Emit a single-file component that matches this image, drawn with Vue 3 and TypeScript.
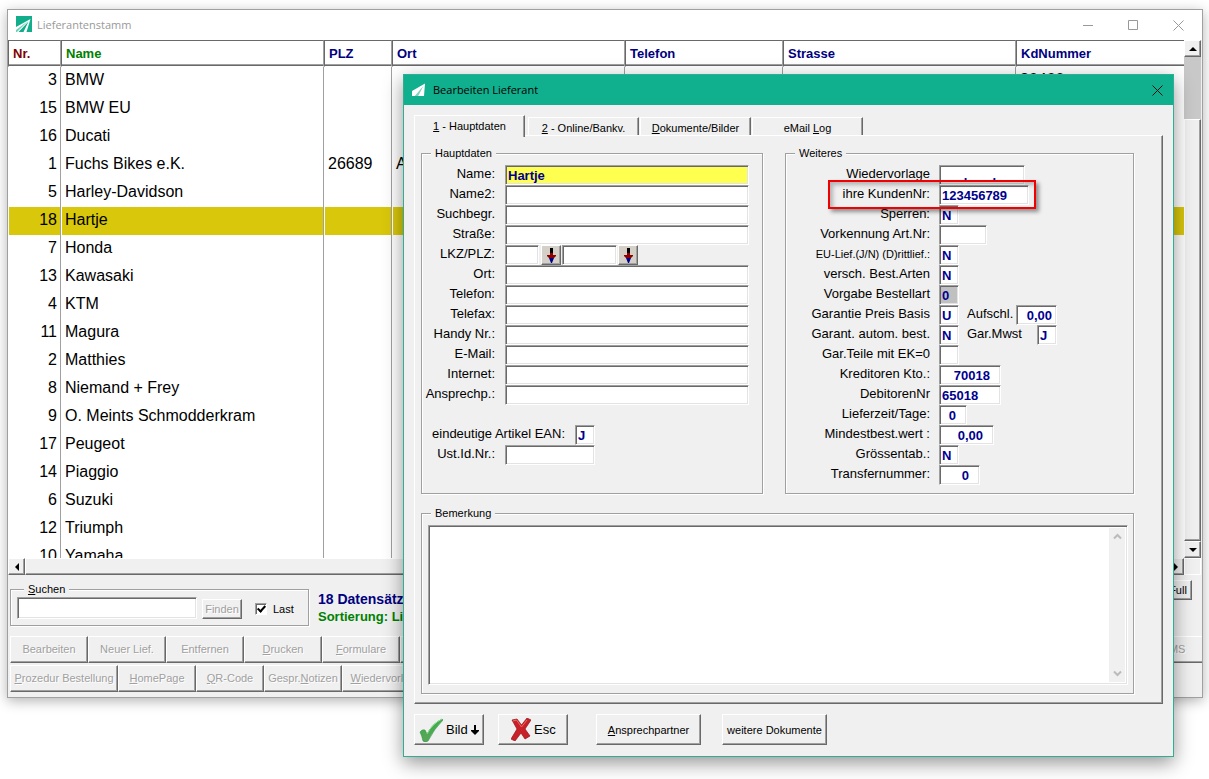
<script setup lang="ts">
import { ref } from 'vue'

interface Supplier { nr: number; name: string; plz?: string; ort?: string; kd?: string }
interface Extra { id: string; label: string; value: string; size: string; right?: boolean }
interface Field {
  id: string
  label: string
  value: string
  size: string
  right?: boolean
  small?: boolean
  grey?: boolean
  extra?: Extra
}
interface Action { pre: string; key: string; post: string; wide?: string }

const suppliers: Supplier[] = [
  { nr: 3, name: 'BMW', kd: '30400' },
  { nr: 15, name: 'BMW EU' },
  { nr: 16, name: 'Ducati' },
  { nr: 1, name: 'Fuchs Bikes e.K.', plz: '26689', ort: 'A' },
  { nr: 5, name: 'Harley-Davidson' },
  { nr: 18, name: 'Hartje' },
  { nr: 7, name: 'Honda' },
  { nr: 13, name: 'Kawasaki' },
  { nr: 4, name: 'KTM' },
  { nr: 11, name: 'Magura' },
  { nr: 2, name: 'Matthies' },
  { nr: 8, name: 'Niemand + Frey' },
  { nr: 9, name: 'O. Meints Schmodderkram' },
  { nr: 17, name: 'Peugeot' },
  { nr: 14, name: 'Piaggio' },
  { nr: 6, name: 'Suzuki' },
  { nr: 12, name: 'Triumph' },
  { nr: 10, name: 'Yamaha' },
]
const selected = ref(18)

const upper: Field[] = [
  { id: 'name', label: 'Name:', value: 'Hartje', size: 'w-full' },
  { id: 'name2', label: 'Name2:', value: '', size: 'w-full' },
  { id: 'such', label: 'Suchbegr.', value: '', size: 'w-full' },
  { id: 'str', label: 'Straße:', value: '', size: 'w-full' },
]
const lower: Field[] = [
  { id: 'ort', label: 'Ort:', value: '', size: 'w-full' },
  { id: 'tel', label: 'Telefon:', value: '', size: 'w-full' },
  { id: 'fax', label: 'Telefax:', value: '', size: 'w-full' },
  { id: 'handy', label: 'Handy Nr.:', value: '', size: 'w-full' },
  { id: 'mail', label: 'E-Mail:', value: '', size: 'w-full' },
  { id: 'web', label: 'Internet:', value: '', size: 'w-full' },
  { id: 'ansp', label: 'Ansprechp.:', value: '', size: 'w-full' },
]
const nb = '\u00a0'
const more: Field[] = [
  { id: 'wv', label: 'Wiedervorlage', value: nb.repeat(6) + '.' + nb.repeat(7) + '.', size: 'w-86' },
  { id: 'kd', label: 'ihre KundenNr:', value: '123456789', size: 'w-90' },
  { id: 'sperr', label: 'Sperren:', value: 'N', size: 'w-20' },
  { id: 'vork', label: 'Vorkennung Art.Nr:', value: '', size: 'w-48' },
  { id: 'eu', label: 'EU-Lief.(J/N) (D)rittlief.:', value: 'N', size: 'w-20', small: true },
  { id: 'versch', label: 'versch. Best.Arten', value: 'N', size: 'w-20' },
  { id: 'vorg', label: 'Vorgabe Bestellart', value: '0', size: 'w-20', grey: true },
  { id: 'gpb', label: 'Garantie Preis Basis', value: 'U', size: 'w-20', extra: { id: 'auf', label: 'Aufschl.', value: '0,00', size: 'w-41', right: true } },
  { id: 'gab', label: 'Garant. autom. best.', value: 'N', size: 'w-20', extra: { id: 'mwst', label: 'Gar.Mwst', value: 'J', size: 'w-20' } },
  { id: 'gt', label: 'Gar.Teile mit EK=0', value: '', size: 'w-20' },
  { id: 'kred', label: 'Kreditoren Kto.:', value: '70018', size: 'w-62', right: true },
  { id: 'deb', label: 'DebitorenNr', value: '65018', size: 'w-62' },
  { id: 'lz', label: 'Lieferzeit/Tage:', value: '0', size: 'w-28', right: true },
  { id: 'mbw', label: 'Mindestbest.wert :', value: '0,00', size: 'w-55', right: true },
  { id: 'groe', label: 'Grössentab.:', value: 'N', size: 'w-20' },
  { id: 'tn', label: 'Transfernummer:', value: '0', size: 'w-41', right: true },
]

const rowOne: Action[] = [
  { pre: 'Bearbeiten', key: '', post: '' },
  { pre: 'Neuer Lief.', key: '', post: '' },
  { pre: 'Entfernen', key: '', post: '' },
  { pre: '', key: 'D', post: 'rucken' },
  { pre: '', key: 'F', post: 'ormulare' },
  { pre: '', key: '', post: '' },
]
const rowTwo: Action[] = [
  { pre: '', key: 'P', post: 'rozedur Bestellung', wide: 'b-108' },
  { pre: '', key: 'H', post: 'omePage' },
  { pre: '', key: 'Q', post: 'R-Code', wide: 'b-68' },
  { pre: 'Gespr.', key: 'N', post: 'otizen' },
  { pre: '', key: 'W', post: 'iedervorlage', wide: 'b-88' },
]
const tabs: Action[] = [
  { pre: '', key: '1', post: ' - Hauptdaten' },
  { pre: '', key: '2', post: ' - Online/Bankv.' },
  { pre: '', key: 'D', post: 'okumente/Bilder' },
  { pre: 'eMail ', key: 'L', post: 'og' },
]
const activeTab = ref(0)
const last = ref(true)
</script>

<template>
  <main class="desktop">
    <section class="window">
      <header class="titlebar">
        <svg class="logo" viewBox="0 0 16 16" width="16" height="16">
          <rect width="16" height="16" fill="#12ae8c" />
          <path d="M0 11 L14.5 3 L10.5 16 H7.5 L12.5 5.5 L2.5 16 H0 Z" fill="#fff" />
          <path d="M0 14 L12 5 L1 16 H0 Z" fill="#12ae8c" opacity=".6" />
        </svg>
        <h1>Lieferantenstamm</h1>
        <div class="winbtns">
          <button type="button" aria-label="Minimieren"><svg width="11" height="11" viewBox="0 0 11 11"><path d="M0 5.5H10" /></svg></button>
          <button type="button" aria-label="Maximieren"><svg width="11" height="11" viewBox="0 0 11 11"><path d="M.5 .5H9.5V9.5H.5Z" /></svg></button>
          <button type="button" aria-label="Schließen"><svg width="11" height="11" viewBox="0 0 11 11"><path d="M.5 .5L10.5 10.5M10.5 .5L.5 10.5" /></svg></button>
        </div>
      </header>

      <div class="listarea">
        <div class="listcol">
          <div class="tablewrap">
            <table>
              <colgroup>
                <col class="c-nr" /><col class="c-name" /><col class="c-plz" /><col class="c-ort" /><col class="c-tel" /><col class="c-ort" /><col />
              </colgroup>
              <thead>
                <tr><th class="red">Nr.</th><th class="green">Name</th><th>PLZ</th><th>Ort</th><th>Telefon</th><th>Strasse</th><th>KdNummer</th></tr>
              </thead>
              <tbody>
                <tr v-for="s in suppliers" :key="s.nr" :class="{ sel: s.nr === selected }" @click="selected = s.nr">
                  <td class="num">{{ s.nr }}</td><td>{{ s.name }}</td><td>{{ s.plz }}</td><td>{{ s.ort }}</td><td></td><td></td><td>{{ s.kd }}</td>
                </tr>
              </tbody>
            </table>
          </div>
          <div class="hscroll">
            <button type="button" class="sb" aria-label="Nach links"><svg width="4" height="8" viewBox="0 0 4 8"><path d="M4 0V8L0 4Z" /></svg></button>
            <div class="hthumb"></div>
            <button type="button" class="sb" aria-label="Nach rechts"><svg width="4" height="8" viewBox="0 0 4 8"><path d="M0 0V8L4 4Z" /></svg></button>
          </div>
        </div>
        <div class="vscroll">
          <button type="button" class="sb" aria-label="Nach oben"><svg width="8" height="4" viewBox="0 0 8 4"><path d="M0 4H8L4 0Z" /></svg></button>
          <div class="vtrack"></div>
          <div class="vthumb"></div>
          <button type="button" class="sb" aria-label="Nach unten"><svg width="8" height="4" viewBox="0 0 8 4"><path d="M0 0H8L4 4Z" /></svg></button>
          <div class="corner"></div>
        </div>
      </div>

      <div class="searchrow">
        <fieldset class="group search">
          <legend><u>S</u>uchen</legend>
          <div class="searchbody">
            <input type="text" class="field searchinput" aria-label="Suchen" />
            <button type="button" class="btn find" disabled>Finden</button>
            <label class="last"><input v-model="last" type="checkbox" />Last</label>
          </div>
        </fieldset>
        <div class="status">
          <p class="count">18 Datensätze</p>
          <p class="sort">Sortierung: Lieferant</p>
        </div>
        <button type="button" class="btn full">Full</button>
      </div>
      <div class="actions">
        <button v-for="(a, i) in rowOne" :key="i" type="button" class="btn act" disabled>{{ a.pre }}<u>{{ a.key }}</u>{{ a.post }}</button>
        <button type="button" class="btn act sms" disabled>SMS</button>
      </div>
      <div class="actions second">
        <button v-for="(a, i) in rowTwo" :key="i" type="button" class="btn act" :class="a.wide" disabled>{{ a.pre }}<u>{{ a.key }}</u>{{ a.post }}</button>
      </div>
    </section>

    <section class="dialog" role="dialog" aria-labelledby="dlg-title">
      <header class="dlgtitle">
        <svg width="14" height="14" viewBox="0 0 14 14"><path d="M0 8L13 .5L12 13H6L11 3.5L3 13H0Z" fill="#fff" /><path d="M6 13L11 3.5L3 13Z" fill="#fff" opacity=".45" /></svg>
        <h2 id="dlg-title">Bearbeiten Lieferant</h2>
        <button type="button" class="close" aria-label="Dialog schließen"><svg width="11" height="11" viewBox="0 0 11 11"><path d="M.5 .5L10.5 10.5M10.5 .5L.5 10.5" stroke="#111" /></svg></button>
      </header>
      <div class="dlgbody">
        <div class="tabs" role="tablist">
          <button v-for="(t, i) in tabs" :key="i" type="button" role="tab" class="tab" :class="{ on: i === activeTab }" :aria-selected="i === activeTab" @click="activeTab = i">{{ t.pre }}<u>{{ t.key }}</u>{{ t.post }}</button>
        </div>
        <div class="panel">
          <div class="cols">
            <fieldset class="group main">
              <legend>Hauptdaten</legend>
              <div v-for="f in upper" :key="f.id" class="row">
                <label :for="f.id">{{ f.label }}</label>
                <input :id="f.id" type="text" class="field" :class="[f.size, { focus: f.id === 'name' }]" :value="f.value" />
              </div>
              <div class="row">
                <label for="lkz">LKZ/PLZ:</label>
                <div class="plz">
                  <input id="lkz" type="text" class="field w-34" />
                  <button type="button" class="btn pick" aria-label="Land wählen"><svg width="9" height="15" viewBox="0 0 9 15"><path d="M3 0H6V5H3Z" fill="#000" /><path d="M3 5H6V7H9V8L7 10H2L0 8V7H3Z" fill="#8b0000" /><path d="M2 10H7L5 15H4Z" fill="#00008b" /></svg></button>
                  <input type="text" class="field w-55" aria-label="PLZ" />
                  <button type="button" class="btn pick" aria-label="PLZ wählen"><svg width="9" height="15" viewBox="0 0 9 15"><path d="M3 0H6V5H3Z" fill="#000" /><path d="M3 5H6V7H9V8L7 10H2L0 8V7H3Z" fill="#8b0000" /><path d="M2 10H7L5 15H4Z" fill="#00008b" /></svg></button>
                </div>
              </div>
              <div v-for="f in lower" :key="f.id" class="row">
                <label :for="f.id">{{ f.label }}</label>
                <input :id="f.id" type="text" class="field" :class="f.size" :value="f.value" />
              </div>
              <div class="row"></div>
              <div class="row ean">
                <label for="ean">eindeutige Artikel EAN:</label>
                <input id="ean" type="text" class="field w-20" value="J" />
              </div>
              <div class="row">
                <label for="ust">Ust.Id.Nr.:</label>
                <input id="ust" type="text" class="field w-90" />
              </div>
              <div class="row"></div>
            </fieldset>

            <fieldset class="group other">
              <legend>Weiteres</legend>
              <div v-for="f in more" :key="f.id" class="row" :class="{ marked: f.id === 'kd' }">
                <label :for="f.id" :class="{ small: f.small }">{{ f.label }}</label>
                <input :id="f.id" type="text" class="field" :class="[f.size, { right: f.right, grey: f.grey }]" :value="f.value" />
                <div v-if="f.extra" class="extra">
                  <label :for="f.extra.id">{{ f.extra.label }}</label>
                  <input :id="f.extra.id" type="text" class="field" :class="[f.extra.size, { right: f.extra.right }]" :value="f.extra.value" />
                </div>
              </div>
            </fieldset>
          </div>

          <fieldset class="group remark">
            <legend>Bemerkung</legend>
            <div class="memo">
              <textarea aria-label="Bemerkung"></textarea>
              <div class="memobar">
                <svg width="9" height="7" viewBox="0 0 9 7"><path d="M1 5.5L4.5 2L8 5.5" /></svg>
                <svg width="9" height="7" viewBox="0 0 9 7"><path d="M1 1.5L4.5 5L8 1.5" /></svg>
              </div>
            </div>
          </fieldset>
        </div>

        <footer class="foot">
          <button type="button" class="btn icon">
            <svg width="24" height="24" viewBox="0 0 24 24">
              <defs><linearGradient id="tick-fill" x1="0" y1="0" x2="0" y2="1"><stop offset="0" stop-color="#3fae49" /><stop offset="1" stop-color="#5aa65a" /></linearGradient></defs>
              <path d="M1 14Q3 11 6 12L8 16Q13 6 23 1L24 2Q15 11 9 23Q6 25 4 23Q3 18 1 14Z" fill="url(#tick-fill)" stroke="#2f9440" stroke-width=".6" />
              <path d="M8 16Q13 6 23 1" fill="none" stroke="#8fdc94" />
            </svg>
            <span>Bild</span>
            <svg width="8" height="10" viewBox="0 0 8 10"><path d="M3 0H5V5H8V6L4 10L0 6V5H3Z" /></svg>
          </button>
          <button type="button" class="btn icon esc">
            <svg width="20" height="23" viewBox="0 0 20 23">
              <path d="M1 2L6 1L10.500 7L16 0L20 2L14 11L19 18L14 21L10 15L4 23L0 21L6 11Z" fill="#c92127" stroke="#8e1418" stroke-width=".7" />
              <path d="M2 3L5.500 2L10.500 9L16 2" fill="none" stroke="#ee6a66" />
            </svg>
            <span>Esc</span>
          </button>
          <button type="button" class="btn text"><u>A</u>nsprechpartner</button>
          <button type="button" class="btn text docs">weitere Dokumente</button>
        </footer>
      </div>
    </section>
  </main>
</template>

<style>
body { margin: 0; background: #fff; }
</style>

<style scoped>
*, *::after { box-sizing: border-box; }
.desktop {
  position: relative;
  min-height: 100vh;
  overflow: hidden;
  font-family: "Liberation Sans", Arial, sans-serif;
  font-size: 11px;
  color: #000;
}
h1, h2, p { margin: 0; font-weight: 400; }
button, input, textarea { font-family: inherit; margin: 0; }

.window {
  position: absolute;
  top: 9px;
  right: 6px;
  bottom: 81px;
  left: 7px;
  display: flex;
  flex-direction: column;
  background: #f0f0f0;
  border: 1px solid #a0a0a0;
  box-shadow: 0 3px 12px rgba(0, 0, 0, .3);
}
.titlebar { display: flex; align-items: center; height: 30px; padding: 0 1px 0 8px; background: #fff; }
.logo { margin-bottom: 2px; }
.titlebar h1, .dlgtitle h2 { font-family: "Open Sans", "Noto Sans", sans-serif; font-size: 11px; line-height: 16px; }
.titlebar h1 { margin-left: 5px; color: #999; }
.winbtns { display: flex; margin-left: auto; }
.winbtns button { width: 45px; height: 28px; padding: 0; border: 0; background: none; }
.winbtns svg, .close svg { display: block; margin: auto; fill: none; stroke: #999; }

.listarea { display: flex; flex: 1; min-height: 0; padding-right: 1px; }
.listcol { display: flex; flex: 1; flex-direction: column; min-width: 0; }
.tablewrap { flex: 1; min-height: 0; overflow: hidden; background: #fff; }
table { width: 100%; table-layout: fixed; border-collapse: separate; border-spacing: 0; }
.c-nr { width: 53px; }
.c-name { width: 263px; }
.c-plz { width: 68px; }
.c-ort { width: 233px; }
.c-tel { width: 158px; }
th {
  height: 27px;
  padding: 0 4px;
  border: 1px solid #696969;
  border-right-color: #a0a0a0;
  border-bottom-color: #fff;
  box-shadow: inset 0 -1px #696969, inset 0 -2px #a0a0a0;
  color: #000080;
  font-size: 13px;
  text-align: left;
}
.red { color: #800000; }
.green { color: #008000; }
td {
  height: 28px;
  padding: 0 3px 2px;
  border-left: 1px solid #fff;
  border-right: 1px solid #a0a0a0;
  font-size: 16px;
  line-height: 24px;
  white-space: nowrap;
}
td:last-child, th:last-child { border-right: 0; }
.num { text-align: right; }
.sel td { background: #d9c70b; background-clip: padding-box; }

.btn, .sb, .hthumb, .vthumb {
  background: #f0f0f0;
  border: 1px solid;
  border-color: #fff #696969 #696969 #fff;
  border-radius: 0;
  box-shadow: inset -1px -1px #a0a0a0;
}
.sb { display: flex; flex: none; align-items: center; justify-content: center; width: 17px; height: 17px; padding: 0; }
.hscroll { display: flex; height: 17px; }
.hthumb { flex: 1; }
.vscroll { display: flex; flex-direction: column; width: 17px; }
.vtrack { height: 62px; background: #c8c8c8; }
.vthumb { flex: 1; }
.corner { height: 17px; border: 1px solid #fff; }

.group {
  min-width: 0;
  margin: 0;
  padding: 5px 0 8px;
  border: 1px solid #a0a0a0;
  box-shadow: 1px 1px #fff, inset 1px 1px #fff;
}
legend { margin-left: 9px; padding: 0 4px; background: #f0f0f0; line-height: 13px; }
.field {
  display: block;
  height: 20px;
  padding: 0 2px;
  border: 1px solid;
  border-color: #a0a0a0 #fff #fff #a0a0a0;
  border-radius: 0;
  outline: 0;
  background: #fff;
  box-shadow: inset 1px 1px #696969, inset -1px -1px #e3e3e3;
  color: #000090;
  font-size: 13px;
  font-weight: 700;
}
.btn { padding: 0; font-size: 11px; color: #000; white-space: nowrap; }
.btn:disabled { color: #a0a0a0; text-shadow: 1px 1px #fff; }

.searchrow { display: flex; align-items: flex-start; height: 61px; padding: 5px 10px 0 2px; }
.search { width: 299px; margin-top: 4px; padding: 2px 6px 6px; }
.search legend { padding: 0 4px; margin-left: 7px; line-height: 11px; }
.searchbody { display: flex; align-items: flex-end; }
.searchinput { width: 180px; height: 22px; }
.find { width: 40px; height: 20px; margin-left: 5px; }
.last { display: flex; align-items: center; height: 20px; margin-left: 13px; }
.last input {
  display: grid;
  place-items: center;
  width: 12px;
  height: 12px;
  margin: 0 6px 0 0;
  appearance: none;
  border: 1px solid;
  border-color: #a0a0a0 #fff #fff #a0a0a0;
  background: #fff;
  box-shadow: inset 1px 1px #696969;
}
.last input:checked::after { content: ""; width: 5px; height: 8px; margin-bottom: 2px; border: solid #000; border-width: 0 2px 2px 0; transform: rotate(42deg); }
.status { margin: 10px 0 0 9px; font-size: 13px; line-height: 18px; white-space: nowrap; }
.status p { font-weight: 700; }
.count { font-size: 14px; color: #000080; }
.sort { color: #008000; }
.full { width: 28px; height: 20px; margin-left: auto; }
.actions { display: flex; height: 27px; padding-left: 2px; }
.second { margin: 2px 0 5px; }
.act { flex: none; width: 78px; padding-bottom: 2px; }
.b-108 { width: 108px; }
.b-68 { width: 68px; }
.b-88 { width: 88px; }
.sms { width: 58px; margin-left: auto; border-right: 0; box-shadow: inset 0 -1px #a0a0a0; }

.dialog {
  position: absolute;
  top: 74px;
  left: 403px;
  width: 771px;
  border: 1px solid #2fae93;
  background: #f0f0f0;
  box-shadow: 0 6px 18px rgba(0, 0, 0, .42);
}
.dlgtitle { display: flex; align-items: center; height: 30px; padding: 0 10px 0 8px; background: #10af8e; }
.dlgtitle svg { flex: none; }
.dlgtitle h2 { margin-left: 7px; }
.close { margin-left: auto; padding: 0; border: 0; background: none; }
.dlgbody { padding: 10px 10px 11px; }
.tabs { display: flex; align-items: flex-end; height: 20px; }
.tab {
  width: 111px;
  height: 18px;
  margin-right: 1px;
  padding: 3px 0 0;
  border: 1px solid;
  border-color: #fff #696969 transparent #fff;
  border-bottom: 0;
  background: #f0f0f0;
  box-shadow: inset -1px 0 #a0a0a0;
  font-size: 11px;
  line-height: 13px;
}
.tab.on { z-index: 1; height: 22px; margin-right: 3px; margin-bottom: -2px; padding-bottom: 3px; }
.panel {
  padding: 11px 28px 9px 6px;
  border: 1px solid;
  border-color: #fff #696969 #696969 #fff;
  box-shadow: inset -1px -1px #a0a0a0;
}
.cols { display: flex; gap: 22px; }
.main { width: 342px; }
.other { flex: 1; }
.row { position: relative; display: flex; height: 20px; }
.row label { flex: none; width: 73px; font-size: 13px; line-height: 18px; text-align: right; white-space: nowrap; }
.row > label + * { margin-left: 10px; }
.other .row > label { width: 144px; }
.other .row > label + * { margin-left: 9px; }
.row .small { font-size: 11px; }
.ean > label { width: 143px; }
.plz { display: flex; }
.pick { width: 20px; height: 20px; background: #d4d0c8; }
.plz .pick:nth-child(2) { margin: 0 1px 0 2px; }
.plz .pick:last-child { margin-left: 1px; }
.pick svg { display: block; margin: auto; }
.extra { display: flex; justify-content: space-between; width: 90px; margin-left: 8px; }
.extra label { width: auto; }
.focus { background: #ffff50; }
.grey { background: #c0c0c0; }
.right { padding-right: 10px; text-align: right; }
.extra .right { padding-right: 4px; }
.w-full { width: 244px; }
.w-20 { width: 20px; }
.w-28 { width: 28px; }
.w-34 { width: 34px; }
.w-41 { width: 41px; }
.w-48 { width: 48px; }
.w-55 { width: 55px; }
.w-62 { width: 62px; }
.w-86 { width: 86px; }
.w-90 { width: 90px; }
.marked::after {
  content: "";
  position: absolute;
  z-index: 2;
  top: -5px;
  left: 42px;
  width: 208px;
  height: 29px;
  border: 2px solid #f00000;
  box-shadow: 3px 3px 4px rgba(0, 0, 0, .4), inset 3px 3px 4px rgba(0, 0, 0, .25);
  pointer-events: none;
}
.remark { margin-top: 13px; padding: 5px 5px 8px 6px; }
.remark legend { margin-left: 3px; }
.memo { display: flex; height: 160px; padding: 2px; border: 1px solid; border-color: #a0a0a0 #fff #fff #a0a0a0; background: #fff; box-shadow: inset 1px 1px #696969, inset -1px -1px #e3e3e3; }
.memo textarea { flex: 1; padding: 2px; border: 0; outline: 0; resize: none; font-size: 13px; }
.memobar { display: flex; flex-direction: column; justify-content: space-between; align-items: center; width: 16px; padding: 5px 0; background: #f0f0f0; }
.memobar svg { fill: none; stroke: #bbb; stroke-width: 2; }
.foot { display: flex; margin-top: 10px; }
.foot .btn { height: 31px; }
.icon { display: flex; align-items: center; gap: 3px; width: 70px; padding-left: 4px; font-size: 13px; }
.esc { margin-left: 14px; padding-left: 12px; }
.text { width: 105px; margin-left: 28px; }
.docs { margin-left: 21px; }
</style>
